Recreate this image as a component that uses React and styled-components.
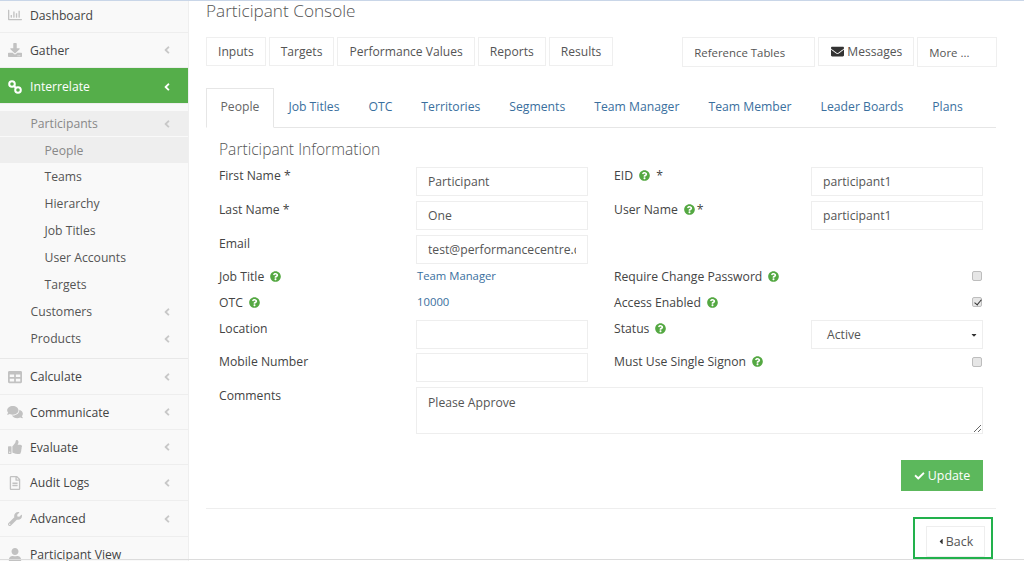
import React from "react";
import styled, { createGlobalStyle } from "styled-components";
import {
  FaRegChartBar, FaDownload, FaTable, FaComments, FaThumbsUp, FaRegFileAlt,
  FaWrench, FaUser, FaAngleLeft, FaQuestionCircle, FaCheck, FaEnvelope, FaCaretLeft, FaCaretDown,
} from "react-icons/fa";

const Global = createGlobalStyle`
  html, body { margin: 0; padding: 0; background: #fff; }
  body { font-family: "Open Sans", "Liberation Sans", sans-serif; font-size: 12.2px; color: #444; }
  * { box-sizing: border-box; }
`;

const Page = styled.div`
  position: relative; width: 1024px; height: 561px; overflow: hidden; display: flex;
  border-top: 1px solid #c9d6e8;
  &::after { content: ""; position: absolute; left: 0; right: 0; bottom: 1px; height: 1px; background: #dcdcdc; }
`;
const Sidebar = styled.nav`
  width: 188px; flex: none; background: #f9f9f9; box-shadow: 1px 0 0 #efefef; height: 100%;
`;
const MenuItem = styled.div`
  display: flex; align-items: center; height: ${p => p.$h || 35}px;
  padding: ${p => p.$pt || 0}px 14px ${p => p.$pb || 0}px 7px;
  border-bottom: 1px solid #eeeeee; color: ${p => p.$active ? "#fff" : "#444"};
  background: ${p => p.$active ? "#55ae4a" : "transparent"};
  & > svg:first-child {
    width: 16px; height: 14px; color: ${p => p.$active ? "#fff" : "#c2c2c2"}; flex: none; margin-right: 7px;
  }
`;
const Label = styled.span`flex: 1;`;
const Chevron = styled(FaAngleLeft)`
  width: 10px; height: 12px; color: ${p => p.$active ? "#fff" : "#c8c8c8"}; margin-right: 2px;
`;
const SubMenu = styled.div`
  padding: 7px 0 6px; border-bottom: 1px solid #e8e8e8;
`;
const SubItem = styled.div`
  display: flex; align-items: center; height: ${p => p.$h || 27}px;
  padding: 0 14px 0 ${p => p.$deep ? 44.5 : 30.5}px;
  background: ${p => p.$on ? "#eeeeee" : "transparent"};
  color: ${p => p.$on ? "#888" : "#555"};
  margin-bottom: ${p => p.$gap || 0}px;
`;
const Main = styled.main`
  flex: 1; padding: 0 28px 0 18px; min-width: 0;
`;
const Title = styled.h1`
  margin: 0; font-size: 17.2px; font-weight: 300; color: #555; line-height: 19px; height: 36px;
`;
const Toolbar = styled.div`display: flex; align-items: flex-start; height: 51px;`;
const ToolButton = styled.div`
  height: ${p => p.$tall ? 30 : 29}px; padding: 0 ${p => p.$pad || 11}px; margin-right: 3px; border: 1px solid #efefef;
  display: flex; align-items: center; color: #555; font-size: ${p => p.$small ? 11.4 : 12.1}px; width: ${p => p.$w ? p.$w + "px" : "auto"}; flex: none;
  svg { width: 15px; height: 13px; color: #333; margin-right: 2px; }
`;
const Spacer = styled.div`width: 66px; flex: none;`;
const Tabs = styled.div`display: flex; height: 40px; border-bottom: 1px solid #e6e6e6; white-space: nowrap;`;
const Tab = styled.div`
  height: 40px; padding: 0 ${p => p.$active ? 13.5 : 14.5}px 4px; display: flex; align-items: center; flex: none;
  color: ${p => p.$active ? "#666" : "#3a6f9e"};
  ${p => p.$active && "background:#fff;border:1px solid #e6e6e6;border-bottom-color:#fff;margin-right:0;"}
`;
const SectionTitle = styled.h2`
  margin: 11px 0 0 13px; font-size: 15.6px; font-weight: 300; color: #555; line-height: 20px; height: 28px;
`;
const Form = styled.div`
  display: grid; grid-template-columns: 197px 172px 26px 197px 172px;
  margin-left: 13px; width: 764px;
`;
const FormRow = styled.div`
  display: contents;
`;
const Cell = styled.div`
  height: ${p => p.$h || 34}px; display: flex; align-items: flex-start;
  grid-column: ${p => p.$col};
  ${p => p.$span && `grid-column: 2 / 6;`}
  ${p => p.$right && "justify-content: flex-end;"}
`;
const FieldLabel = styled.div`
  line-height: 17px; color: #444; display: flex; align-items: center; white-space: pre;
  margin-top: ${p => p.$mt || 0}px;
`;
const Help = styled(FaQuestionCircle)`
  width: 11px; height: 11px; color: #54a842; margin-left: ${p => p.$ml || 6}px; margin-right: ${p => p.$mr || 0}px;
`;
const Input = styled.input`
  width: 172px; height: 29px; border: 1px solid #eeeeee; padding: 0 11px; font: 12.2px "Open Sans", sans-serif; color: #555; background: #fff; outline: none;
`;
const ValueLink = styled.div`
  font-size: 11.3px; line-height: 15px; color: #3a6f9e; margin-left: 1px; margin-top: -1px;
`;
const Check = styled.input`
  appearance: none; position: relative; margin: ${p => p.$mt || 2}px 1px 0 0; width: 10px; height: 10px; flex: none;
  background: #e6e6e6; border: 1px solid #bdbdbd; border-radius: 2px;
  &:checked::after {
    content: ""; position: absolute; left: 2.5px; top: 0; width: 3px; height: 6px;
    border: solid #333; border-width: 0 1.5px 1.5px 0; transform: rotate(40deg);
  }
`;
const SelectBox = styled.div`
  position: relative; width: 172px; height: 29px; border: 1px solid #eeeeee; display: flex; align-items: center; padding-left: 15px; color: #555; font-size: 12.2px;
  svg { position: absolute; right: 4px; top: 10px; width: 8px; height: 8px; color: #333; }
`;
const Comments = styled.textarea`
  width: 567px; height: 47px; border: 1px solid #eeeeee; padding: 6px 11px; font: 12.2px "Open Sans", sans-serif; color: #555; outline: none; display: block;
`;
const ActionRow = styled.div`
  display: flex; justify-content: flex-end; margin-top: 26px; padding: 0 13px 17px 0; border-bottom: 1px solid #eeeeee; width: 790px;
`;
const UpdateButton = styled.div`
  width: 82px; height: 31px; background: #5cb85c; color: #fff; display: flex; align-items: center; justify-content: center; font-size: 12.4px;
  svg { width: 11px; height: 10px; margin-right: 3px; }
`;
const BackRow = styled.div`
  display: flex; justify-content: flex-end; padding-top: 8px; width: 787px;
`;
const BackHighlight = styled.div`
  width: 80px; height: 42px; border: 2px solid #22b14c; padding: 7px 6px 0 11px;
`;
const BackButton = styled.div`
  height: 31px; width: 59px; border: 1px solid #eeeeee; display: flex; align-items: center; justify-content: center; color: #555; font-size: 12.4px;
  svg { width: 6px; height: 9px; margin-right: 2px; color: #333; }
`;

const RingsIcon = () => (
  <svg viewBox="0 0 16 14" fill="none" stroke="currentColor" strokeWidth="2">
    <circle cx="5" cy="4" r="2.8" />
    <circle cx="11" cy="10" r="2.8" />
    <path d="M7 6l2 2" />
  </svg>
);

const mainMenuTop = [
  { icon: FaRegChartBar, name: "Dashboard", h: 32, noChev: true, pb: 3 },
  { icon: FaDownload, name: "Gather", h: 35 },
];
const mainMenuBottom = [
  { icon: FaTable, name: "Calculate", h: 36 },
  { icon: FaComments, name: "Communicate", h: 35 },
  { icon: FaThumbsUp, name: "Evaluate", h: 35 },
  { icon: FaRegFileAlt, name: "Audit Logs", h: 36 },
  { icon: FaWrench, name: "Advanced", h: 36 },
  { icon: FaUser, name: "Participant View", h: 36, noChev: true },
];
const subs = ["Teams", "Hierarchy", "Job Titles", "User Accounts", "Targets"];
const tabs = ["Job Titles", "OTC", "Territories", "Segments", "Team Manager", "Team Member", "Leader Boards", "Plans"];

function Item({ icon: Icon, name, h, noChev, active, pb, pt }) {
  return (
    <MenuItem $h={h} $active={active} $pb={pb} $pt={pt}>
      <Icon />
      <Label>{name}</Label>
      {!noChev && <Chevron $active={active} />}
    </MenuItem>
  );
}

export default function App() {
  return (
    <Page>
      <Global />
      <Sidebar>
        {mainMenuTop.map(m => <Item key={m.name} {...m} />)}
        <Item icon={RingsIcon} name="Interrelate" h={36} pt={2} active />
        <SubMenu>
          <SubItem $on $h={25} $gap={1}><Label>Participants</Label><Chevron /></SubItem>
          <SubItem $on $deep $h={26}>People</SubItem>
          {subs.map(s => <SubItem key={s} $deep>{s}</SubItem>)}
          <SubItem><Label>Customers</Label><Chevron /></SubItem>
          <SubItem><Label>Products</Label><Chevron /></SubItem>
        </SubMenu>
        {mainMenuBottom.map(m => <Item key={m.name} {...m} />)}
      </Sidebar>
      <Main>
        <Title>Participant Console</Title>
        <Toolbar>
          <ToolButton>Inputs</ToolButton>
          <ToolButton>Targets</ToolButton>
          <ToolButton>Performance Values</ToolButton>
          <ToolButton>Reports</ToolButton>
          <ToolButton>Results</ToolButton>
          <Spacer />
          <ToolButton $tall $small $w={133}>Reference Tables</ToolButton>
          <ToolButton><FaEnvelope />Messages</ToolButton>
          <ToolButton $tall $small $w={80}>More ...</ToolButton>
        </Toolbar>
        <Tabs>
          <Tab $active>People</Tab>
          {tabs.map(t => <Tab key={t}>{t}</Tab>)}
        </Tabs>
        <SectionTitle>Participant Information</SectionTitle>
        <Form>
          <FormRow>
            <Cell $col={1}><FieldLabel>First Name *</FieldLabel></Cell>
            <Cell $col={2}><Input defaultValue="Participant" /></Cell>
            <Cell $col={4}><FieldLabel>EID<Help />  *</FieldLabel></Cell>
            <Cell $col={5}><Input defaultValue="participant1" /></Cell>
          </FormRow>
          <FormRow>
            <Cell $col={1}><FieldLabel>Last Name *</FieldLabel></Cell>
            <Cell $col={2}><Input defaultValue="One" /></Cell>
            <Cell $col={4}><FieldLabel>User Name<Help $mr={2} />*</FieldLabel></Cell>
            <Cell $col={5}><Input defaultValue="participant1" /></Cell>
          </FormRow>
          <FormRow>
            <Cell $col={1}><FieldLabel>Email</FieldLabel></Cell>
            <Cell $col={2}><Input defaultValue="test@performancecentre.com" /></Cell>
          </FormRow>
          <FormRow>
            <Cell $col={1} $h={26}><FieldLabel $mt={-1}>Job Title<Help /></FieldLabel></Cell>
            <Cell $col={2} $h={26}><ValueLink>Team Manager</ValueLink></Cell>
            <Cell $col={4} $h={26}><FieldLabel $mt={-1}>Require Change Password<Help /></FieldLabel></Cell>
            <Cell $col={5} $h={26} $right><Check type="checkbox" readOnly /></Cell>
          </FormRow>
          <FormRow>
            <Cell $col={1} $h={25}><FieldLabel $mt={-1}>OTC<Help /></FieldLabel></Cell>
            <Cell $col={2} $h={25}><ValueLink>10000</ValueLink></Cell>
            <Cell $col={4} $h={25}><FieldLabel $mt={-1}>Access Enabled<Help /></FieldLabel></Cell>
            <Cell $col={5} $h={25} $right><Check type="checkbox" readOnly defaultChecked /></Cell>
          </FormRow>
          <FormRow>
            <Cell $col={1} $h={33}><FieldLabel>Location</FieldLabel></Cell>
            <Cell $col={2} $h={33}><Input /></Cell>
            <Cell $col={4} $h={33}><FieldLabel>Status<Help /></FieldLabel></Cell>
            <Cell $col={5} $h={33}><SelectBox>Active<FaCaretDown /></SelectBox></Cell>
          </FormRow>
          <FormRow>
            <Cell $col={1}><FieldLabel>Mobile Number</FieldLabel></Cell>
            <Cell $col={2}><Input /></Cell>
            <Cell $col={4}><FieldLabel>Must Use Single Signon<Help /></FieldLabel></Cell>
            <Cell $col={5} $right><Check type="checkbox" readOnly $mt={4} /></Cell>
          </FormRow>
          <FormRow>
            <Cell $col={1} $h={47}><FieldLabel>Comments</FieldLabel></Cell>
            <Cell $span $h={47}><Comments defaultValue="Please Approve" /></Cell>
          </FormRow>
        </Form>
        <ActionRow>
          <UpdateButton><FaCheck />Update</UpdateButton>
        </ActionRow>
        <BackRow>
          <BackHighlight><BackButton><FaCaretLeft />Back</BackButton></BackHighlight>
        </BackRow>
      </Main>
    </Page>
  );
}
